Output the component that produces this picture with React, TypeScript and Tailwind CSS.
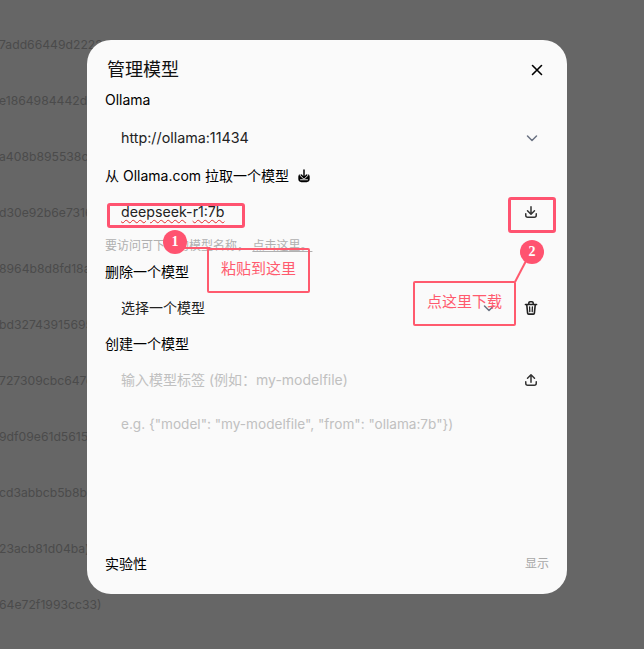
const FONT = "font-['Inter','Noto_Sans_CJK_SC',sans-serif]";

const hashes = [
  "7add66449d2222",
  "e1864984442d",
  "a408b895538c",
  "d30e92b6e7316",
  "8964b8d8fd18a",
  "bd32743915695",
  "727309cbc647c",
  "9df09e61d5615",
  "cd3abbcb5b8b7",
  "23acb81d04ba)",
  "64e72f1993cc33)",
];

const Chevron = () => (
  <svg viewBox="0 0 16 16" className="size-4 text-gray-500" fill="none" stroke="currentColor" strokeWidth="1.5">
    <path d="M3.5 6l4.5 4.5L12.5 6" strokeLinecap="round" strokeLinejoin="round" />
  </svg>
);

const DownloadIcon = () => (
  <svg viewBox="0 0 16 16" className="size-4 text-[#333]" fill="currentColor">
    <path d="M8.75 2.75a.75.75 0 0 0-1.5 0v5.69L5.03 6.22a.75.75 0 0 0-1.06 1.06l3.5 3.5a.75.75 0 0 0 1.06 0l3.5-3.5a.75.75 0 0 0-1.06-1.06L8.75 8.44V2.75Z" />
    <path d="M3.5 9.75a.75.75 0 0 0-1.5 0v1.5A2.75 2.75 0 0 0 4.75 14h6.5A2.75 2.75 0 0 0 14 11.25v-1.5a.75.75 0 0 0-1.5 0v1.5c0 .69-.56 1.25-1.25 1.25h-6.5c-.69 0-1.25-.56-1.25-1.25v-1.5Z" />
  </svg>
);

const UploadIcon = () => (
  <svg viewBox="0 0 16 16" className="size-4 text-[#333]" fill="currentColor">
    <path d="M7.25 10.25a.75.75 0 0 0 1.5 0V4.56l2.22 2.22a.75.75 0 1 0 1.06-1.06l-3.5-3.5a.75.75 0 0 0-1.06 0l-3.5 3.5a.75.75 0 0 0 1.06 1.06l2.22-2.22v5.69Z" />
    <path d="M3.5 9.75a.75.75 0 0 0-1.5 0v1.5A2.75 2.75 0 0 0 4.75 14h6.5A2.75 2.75 0 0 0 14 11.25v-1.5a.75.75 0 0 0-1.5 0v1.5c0 .69-.56 1.25-1.25 1.25h-6.5c-.69 0-1.25-.56-1.25-1.25v-1.5Z" />
  </svg>
);

const TrashIcon = () => (
  <svg viewBox="0 0 16 16" className="size-4 text-[#222]" fill="none" stroke="currentColor" strokeLinecap="round" strokeLinejoin="round">
    <path d="M2.5 4.5h11" strokeWidth="1.7" />
    <path d="M5.8 4.2V3a1.2 1.2 0 0 1 1.2-1.2h2A1.2 1.2 0 0 1 10.2 3v1.2" strokeWidth="1.5" />
    <path d="M3.8 5l.8 8.2a1 1 0 0 0 1 .9h4.8a1 1 0 0 0 1-.9l.8-8.2" strokeWidth="1.6" />
    <path d="M6.6 6.8l.2 4.8M9.4 6.8l-.2 4.8" strokeWidth="1.3" />
  </svg>
);

const PullIcon = () => (
  <svg viewBox="0 0 16 16" className="size-[14px] text-black">
    <path d="M4 6h8a2.5 2.5 0 0 1 2.5 2.5v3A3.5 3.5 0 0 1 11 15H5a3.5 3.5 0 0 1-3.5-3.5v-3A2.5 2.5 0 0 1 4 6Z" fill="currentColor" />
    <path d="M4 12.3h8" stroke="#fafafa" strokeWidth="1" strokeLinecap="round" />
    <path d="M8 1V9.5M4.8 6.8 8 10l3.2-3.2" fill="none" stroke="#fafafa" strokeWidth="3.2" strokeLinecap="round" strokeLinejoin="round" />
    <path d="M8 1V9.5M4.8 6.8 8 10l3.2-3.2" fill="none" stroke="currentColor" strokeWidth="1.7" strokeLinecap="round" strokeLinejoin="round" />
  </svg>
);

const Badge = ({ n, className }: { n: number; className: string }) => (
  <div
    className={
      "absolute size-6 rounded-full bg-[#ff5370] text-white flex items-center justify-center text-sm font-bold font-['Liberation_Serif',serif] " +
      className
    }
  >
    {n}
  </div>
);

const Label = ({ children, className = "" }: { children: React.ReactNode; className?: string }) => (
  <div className={"h-5 flex items-center text-sm leading-5 text-black " + className}>{children}</div>
);

const App = () => {
  return (
    <div className={"relative w-[644px] h-[649px] overflow-hidden bg-[#666666] " + FONT}>
      {/* page behind the modal */}
      <div className="flex flex-col gap-[36px] pt-[35px] -ml-[1px]">
        {hashes.map((h) => (
          <p key={h} className="h-5 text-[12.2px] leading-5 text-[#4b4b4b] whitespace-nowrap">
            {h}
          </p>
        ))}
      </div>

      <div className="absolute left-[87px] top-[40px] w-[480px] h-[554px] rounded-3xl bg-[#fafafa] px-[18px] pt-[18px] pb-5 flex flex-col">
        <div className="h-6 flex items-center justify-between pl-[2px] pr-[4px]">
          <h2 className="text-lg leading-6 text-[#111]">管理模型</h2>
          <svg viewBox="0 0 16 16" className="size-4 text-black" fill="none" stroke="currentColor" strokeWidth="1.6">
            <path d="M3.5 3.5l9 9M12.5 3.5l-9 9" strokeLinecap="round" />
          </svg>
        </div>

        <Label className="mt-2">Ollama</Label>
        <div className="mt-2 h-10 flex items-center justify-between pl-4 pr-[9px]">
          <span className="text-[14.3px] text-[#222]">http://ollama:11434</span>
          <Chevron />
        </div>

        <Label className="mt-2 gap-2">
          从 Ollama.com 拉取一个模型
          <PullIcon />
        </Label>
        <div className="mt-[6px] h-10 flex items-center justify-between">
          <span className="pl-4 text-[14.2px] text-[#222]">
            <span className="underline decoration-wavy decoration-[#e5282b] decoration-1 underline-offset-2">deepseek</span>
            -
            <span className="underline decoration-wavy decoration-[#e5282b] decoration-1 underline-offset-2">r1:7b</span>
          </span>
          <div className="w-9 h-10 flex items-center justify-center">
            <DownloadIcon />
          </div>
        </div>
        <div className="mt-[6px] h-4 text-xs leading-4 text-[#b0b0b0]">
          要访问可下载的模型名称， <span className="underline">点击这里。</span>
        </div>

        <Label className="mt-2">删除一个模型</Label>
        <div className="mt-[6px] h-10 flex items-center gap-2">
          <div className="flex-1 flex items-center justify-between pl-4 pr-2">
            <span className="text-sm text-[#222]">选择一个模型</span>
            <Chevron />
          </div>
          <div className="w-9 h-10 flex items-center justify-center">
            <TrashIcon />
          </div>
        </div>

        <Label className="mt-[6px]">创建一个模型</Label>
        <div className="mt-[6px] h-10 flex items-center justify-between">
          <span className="pl-4 text-sm text-[#c0c0c0]">输入模型标签 (例如：my-modelfile)</span>
          <div className="w-9 h-10 flex items-center justify-center">
            <UploadIcon />
          </div>
        </div>
        <div className="mt-[14px] h-5 pl-4 text-[13.6px] leading-5 text-[#c0c0c0]">
          {'e.g. {"model": "my-modelfile", "from": "ollama:7b"})'}
        </div>

        <div className="mt-auto h-5 flex items-center justify-between">
          <span className="text-sm text-black">实验性</span>
          <span className="text-xs text-[#a8a8a8]">显示</span>
        </div>
      </div>

      {/* annotations drawn on top of the screenshot */}
      <div className="absolute left-[107px] top-[203px] w-[138px] h-[25px] border-[3px] border-[#ff5370] rounded-[3px]" />
      <div className="absolute left-[508px] top-[197px] w-[48px] h-[36px] border-[3px] border-[#ff5370] rounded-[3px]" />

      <div className="absolute left-[180px] top-[247px] w-[30px] h-[2px] bg-[#ff5a6e]" />
      <div className="absolute left-[207px] top-[248px] w-[103px] h-[45px] border-2 border-[#ff5a6e] rounded-[2px] flex items-center justify-center text-[15px] text-[#ff5a6e] pb-[2px]">
        粘贴到这里
      </div>
      <Badge n={1} className="left-[163px] top-[230px]" />

      <svg className="absolute left-[512px] top-[258px]" width="18" height="26" viewBox="0 0 18 26" fill="none">
        <path d="M15 1 3 24" stroke="#ff5a6e" strokeWidth="2" />
      </svg>
      <div className="absolute left-[413px] top-[281px] w-[103px] h-[45px] border-2 border-[#ff5a6e] rounded-[2px] flex items-center justify-center text-[15px] text-[#ff5a6e] pb-[2px]">
        点这里下载
      </div>
      <Badge n={2} className="left-[520px] top-[240px]" />
    </div>
  );
};

export default App;
